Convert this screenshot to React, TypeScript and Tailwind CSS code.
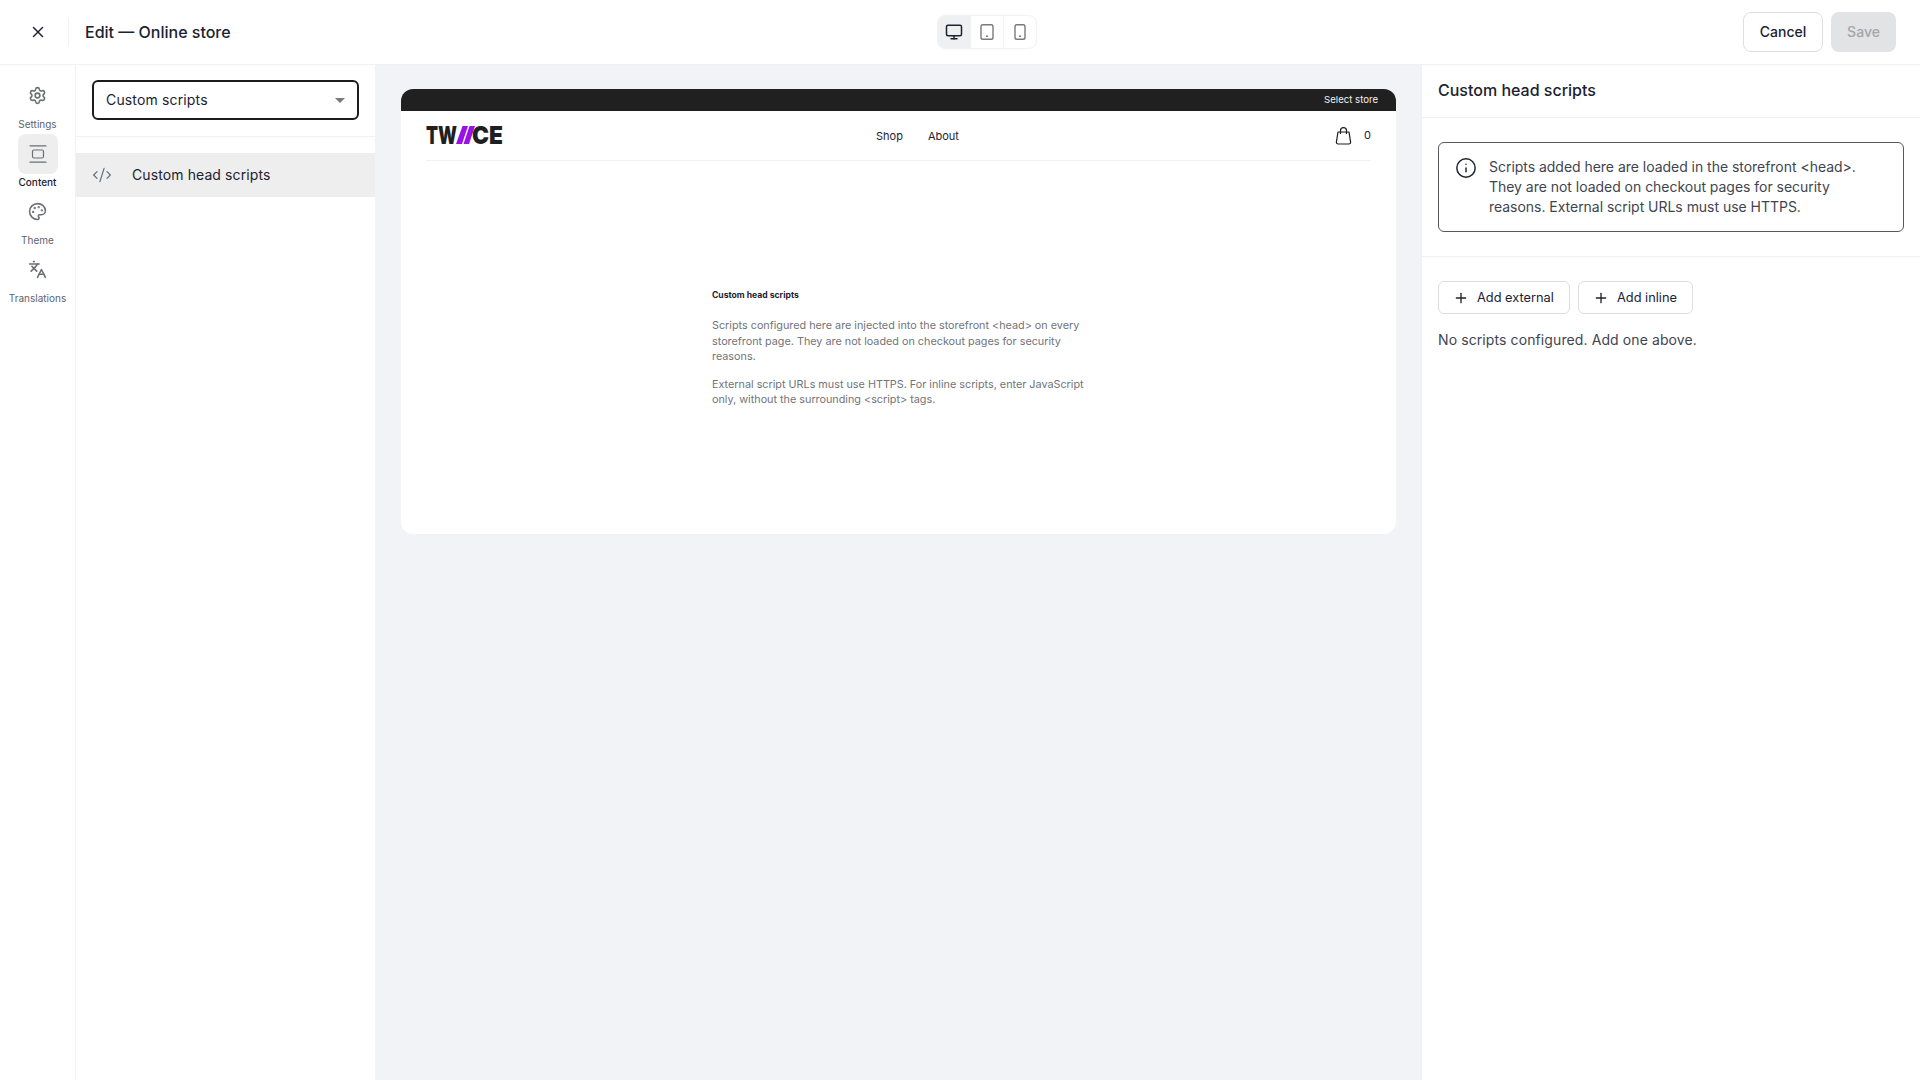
import React from "react";
import { CodeXml, Info, Languages, Monitor, Palette, Plus, Settings, X } from "lucide-react";

const RailItem = ({ icon, label, active }: { icon: React.ReactNode; label: string; active?: boolean }) => (
  <div className="w-full flex flex-col items-center">
    <div className={`w-10 h-10 rounded-lg flex items-center justify-center ${active ? "bg-[#eeeeee]" : "pb-[2px]"} text-[#6b6f76]`}>{icon}</div>
    <span className={`text-[10px] leading-4 ${active ? "text-[#1c2230] font-medium" : "text-[#5c6370]"}`}>{label}</span>
  </div>
);

const ContentIcon = () => (
  <svg width="20" height="20" viewBox="0 0 20 20" fill="none" stroke="currentColor" strokeWidth="1.2">
    <path d="M2 1.8h16M2 18.2h16" strokeLinecap="round" />
    <rect x="4.5" y="6" width="11" height="8" rx="1.5" />
  </svg>
);

const TabletIcon = () => (
  <svg width="18" height="18" viewBox="0 0 18 18" fill="none" stroke="#77797e" strokeWidth="1.4">
    <rect x="3" y="1.8" width="12" height="14.4" rx="1.8" />
    <circle cx="9" cy="13.2" r="0.9" fill="#5f6166" stroke="none" />
  </svg>
);

const PhoneIcon = () => (
  <svg width="18" height="18" viewBox="0 0 18 18" fill="none" stroke="#77797e" strokeWidth="1.4">
    <rect x="4" y="1.8" width="10" height="14.4" rx="1.8" />
    <circle cx="9" cy="13.2" r="0.9" fill="#5f6166" stroke="none" />
  </svg>
);

const BagIcon = () => (
  <svg width="17" height="18" viewBox="0 0 17 18" fill="none" stroke="#1c1c1c" strokeWidth="1.2">
    <path d="M3 5h11l1.6 10.2a1.6 1.6 0 0 1-1.6 1.8H3a1.6 1.6 0 0 1-1.6-1.8z" strokeLinejoin="round" />
    <path d="M5.5 7V3.6a3 3 0 0 1 6 0V7" />
  </svg>
);

const Logo = () => (
  <svg width="77" height="18" viewBox="0 0 77 18" className="overflow-visible -mt-[1px]">
    <text x="0" y="18" fontSize="25" fontWeight="900" fontFamily="Inter" fill="#1f1f21" textLength="31" lengthAdjust="spacingAndGlyphs">TW</text>
    <polygon points="30,18 36,18 42,0 36.5,0" fill="#9a10e8" />
    <polygon points="37.5,18 43,18 49,0 43.5,0" fill="#9a10e8" />
    <text x="46" y="18" fontSize="25" fontWeight="900" fontFamily="Inter" fill="#1f1f21" textLength="31" lengthAdjust="spacingAndGlyphs">CE</text>
  </svg>
);

const App = () => {
  return (
    <div className="w-full h-[1080px] flex flex-col bg-white text-[#1c2230] font-['Inter',sans-serif] overflow-hidden">
      <header className="h-[65px] shrink-0 flex items-center border-b border-[#f0f1f3]">
        <div className="w-[69px] h-7 flex items-center justify-center pl-2 border-r border-[#f0f1f3] mr-4">
          <X size={18} className="text-[#1c2230]" />
        </div>
        <h1 className="w-[852px] text-base font-medium">Edit — Online store</h1>
        <div className="flex h-[34px] w-[100px] rounded-lg border border-[#f0f1f3] overflow-hidden">
          <div className="flex-1 bg-[#eef0f2] flex items-center justify-center"><Monitor size={18} className="text-[#1c2230]" /></div>
          <div className="flex-1 border-x border-[#f0f1f3] flex items-center justify-center"><TabletIcon /></div>
          <div className="flex-1 flex items-center justify-center"><PhoneIcon /></div>
        </div>
        <div className="ml-auto mr-6 flex gap-2">
          <button className="h-10 w-20 rounded-lg border border-[#dcdee2] text-sm font-medium">Cancel</button>
          <button className="h-10 w-[65px] rounded-lg bg-[#e2e3e5] text-sm font-medium text-[#a4a6aa]">Save</button>
        </div>
      </header>
      <div className="flex-1 flex min-h-0">
        <nav className="w-[76px] shrink-0 border-r border-[#f0f1f3] pt-[11px] flex flex-col gap-[2px]">
          <RailItem icon={<Settings size={19} />} label="Settings" />
          <RailItem icon={<ContentIcon />} label="Content" active />
          <RailItem icon={<Palette size={19} />} label="Theme" />
          <RailItem icon={<Languages size={19} />} label="Translations" />
        </nav>
        <aside className="w-[299px] shrink-0">
          <div className="h-[72px] px-4 pt-[15px] border-b border-[#f0f1f3]">
            <div className="h-10 rounded-md border-2 border-[#1c1c1c] flex items-center justify-between px-3 text-sm tracking-[0.15px]">
              <span>Custom scripts</span>
              <span className="w-0 h-0 border-x-[5px] border-x-transparent border-t-[5px] border-t-[#77797e]" />
            </div>
          </div>
          <div className="mt-4 h-11 bg-[#eeeeee] flex items-center pl-4 gap-5 text-sm tracking-[0.1px]">
            <CodeXml size={20} strokeWidth={1.5} className="text-[#6b6f76]" />
            <span>Custom head scripts</span>
          </div>
        </aside>
        <main className="flex-1 bg-[#f1f3f7] pl-[26px] pr-[25px] pt-6">
          <div className="h-[445px] bg-white rounded-xl overflow-hidden">
            <div className="h-[22px] bg-[#202020] flex items-center justify-end pr-[18px] text-[9.6px] text-[#f0f0f0]">Select store</div>
            <div className="mx-[25px] h-[50px] border-b border-[#f1f2f4] flex items-center justify-between relative">
              <Logo />
              <div className="absolute left-[450px] flex gap-[25px] text-[11px] mt-[1px]">
                <span>Shop</span>
                <span>About</span>
              </div>
              <div className="flex items-center gap-3 text-[11px]">
                <BagIcon />
                <span>0</span>
              </div>
            </div>
            <div className="ml-[311px] w-[375px] pt-[126px] text-[10.8px] leading-[15.6px] text-[#71747a]">
              <h2 className="text-[8.6px] font-bold text-[#1c2230] mb-[15px] leading-4">Custom head scripts</h2>
              <p className="mb-3">Scripts configured here are injected into the storefront &lt;head&gt; on every storefront page. They are not loaded on checkout pages for security reasons.</p>
              <p>External script URLs must use HTTPS. For inline scripts, enter JavaScript only, without the surrounding &lt;script&gt; tags.</p>
            </div>
          </div>
        </main>
        <aside className="w-[499px] shrink-0 border-l border-[#f0f1f3]">
          <div className="h-[53px] px-4 pb-[2px] flex items-center border-b border-[#f0f1f3] text-base font-medium">Custom head scripts</div>
          <div className="p-4 py-6 border-b border-[#f0f1f3]">
            <div className="rounded-md border border-[#55585e] py-[14px] px-4 flex gap-3 text-sm leading-5 text-[#3f4550]">
              <Info size={22} strokeWidth={1.6} className="text-[#1c2230] shrink-0" />
              <p className="w-[390px] tracking-[-0.03px]">Scripts added here are loaded in the storefront &lt;head&gt;. They are not loaded on checkout pages for security reasons. External script URLs must use HTTPS.</p>
            </div>
          </div>
          <div className="px-4 pt-6">
            <div className="flex gap-2">
              <button className="h-[33px] w-[132px] px-[14px] rounded-md border border-[#dcdee2] flex items-center gap-2 text-[12.8px]"><Plus size={16} />Add external</button>
              <button className="h-[33px] w-[115px] px-[14px] rounded-md border border-[#dcdee2] flex items-center gap-2 text-[12.8px]"><Plus size={16} />Add inline</button>
            </div>
            <p className="mt-4 text-sm leading-5 tracking-[0.1px] text-[#3f4550]">No scripts configured. Add one above.</p>
          </div>
        </aside>
      </div>
    </div>
  );
};

export default App;
